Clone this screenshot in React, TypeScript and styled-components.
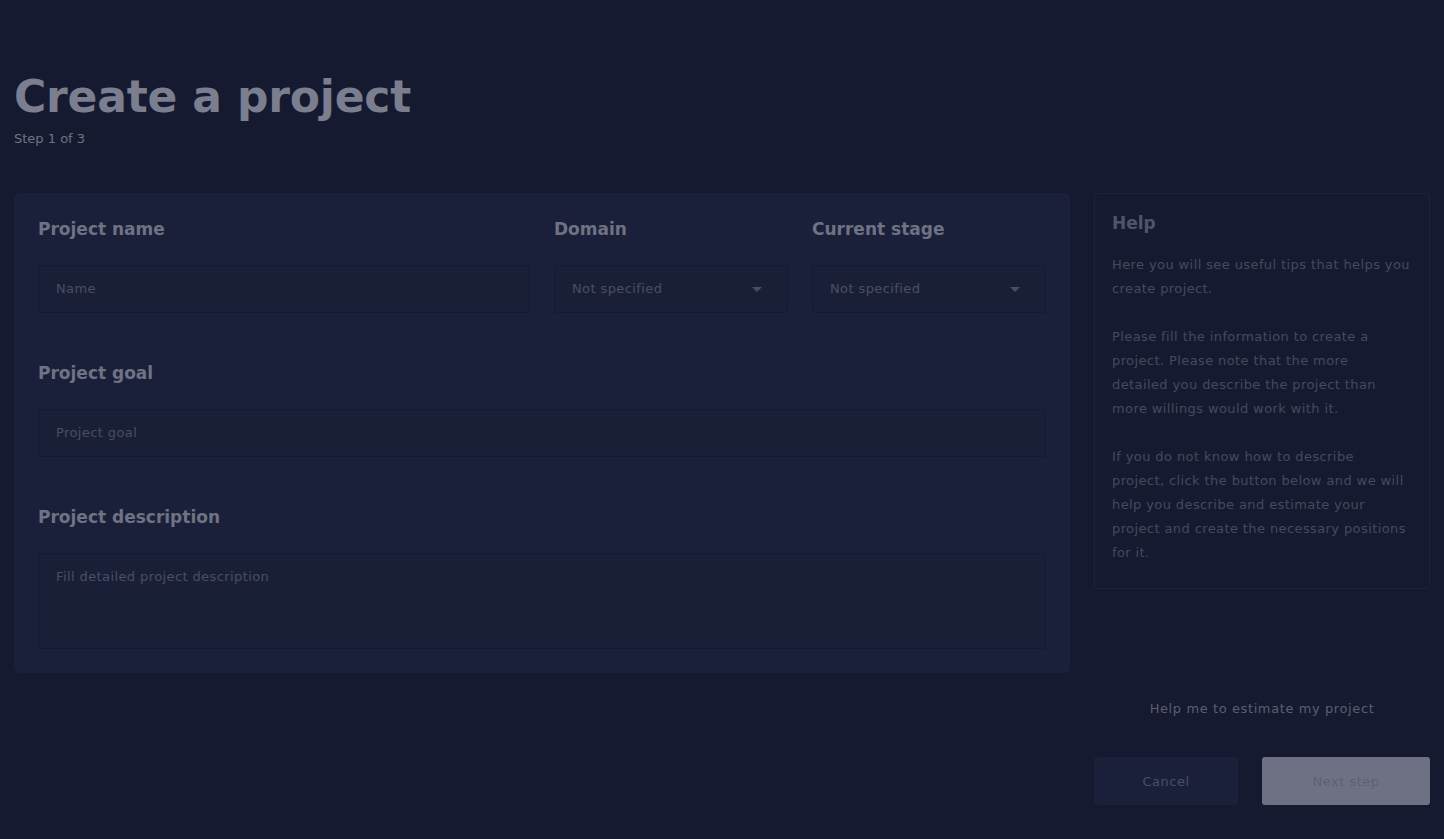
import React from "react";
import styled, { createGlobalStyle } from "styled-components";

const Global = createGlobalStyle`
  html, body { margin: 0; padding: 0; background: #161a30; }
  body { font-family: "DejaVu Sans", "Noto Sans", sans-serif; }
  * { box-sizing: border-box; }
`;

const Page = styled.div`
  min-height: 839px;
  background: #161a30;
  padding: 68px 14px 0 14px;
`;

const Title = styled.h1`
  margin: 0;
  font-size: 44px;
  line-height: 58px;
  font-weight: 700;
  color: #7b7e8e;
  letter-spacing: -0.2px;
`;

const Step = styled.div`
  margin-top: 3px;
  font-size: 13px;
  line-height: 20px;
  color: #6f7283;
`;

const Body = styled.div`
  margin-top: 44px;
  display: flex;
  gap: 24px;
  align-items: flex-start;
`;

const Card = styled.div`
  width: 1056px;
  background: #1b203a;
  border-radius: 6px;
  padding: 24px;
  display: flex;
  flex-direction: column;
  gap: 48px;
`;

const Row = styled.div<{ $cols: string }>`
  display: grid;
  grid-template-columns: ${(p) => p.$cols};
  gap: 24px;
`;

const Field = styled.div`
  display: flex;
  flex-direction: column;
  gap: 24px;
`;

const Label = styled.div`
  font-size: 17px;
  line-height: 24px;
  font-weight: 700;
  color: #6f7283;
`;

const Input = styled.div<{ $tall?: boolean }>`
  height: ${(p) => (p.$tall ? 96 : 48)}px;
  border: 1px solid #151a2f;
  border-radius: 3px;
  background: #1a1f38;
  padding: ${(p) => (p.$tall ? "13px 17px" : "0 17px")};
  display: flex;
  align-items: ${(p) => (p.$tall ? "flex-start" : "center")};
  justify-content: space-between;
  font-size: 13px;
  line-height: 20px;
  letter-spacing: 0.4px;
  color: #4a4e63;
`;

const Caret = styled.span`
  width: 0;
  height: 0;
  border-left: 5px solid transparent;
  border-right: 5px solid transparent;
  border-top: 5px solid #4a4e63;
  margin-right: 8px;
`;

const Side = styled.div`
  width: 336px;
  display: flex;
  flex-direction: column;
`;

const HelpBox = styled.div`
  border: 1px solid #1e2339;
  border-radius: 4px;
  padding: 17px 10px 23px 17px;
`;

const HelpTitle = styled.div`
  font-size: 17px;
  line-height: 24px;
  font-weight: 700;
  color: #50546a;
`;

const HelpText = styled.p`
  margin: 18px 0 0 0;
  font-size: 13px;
  line-height: 24px;
  letter-spacing: 0.4px;
  white-space: nowrap;
  color: #45495e;
  & + & { margin-top: 24px; }
`;

const EstimateLink = styled.div`
  margin-top: 108px;
  text-align: center;
  font-size: 13px;
  line-height: 24px;
  letter-spacing: 0.6px;
  color: #5a5e72;
`;

const Buttons = styled.div`
  margin-top: 36px;
  display: grid;
  grid-template-columns: 144px 168px;
  gap: 24px;
`;

const Button = styled.div<{ $primary?: boolean }>`
  height: 48px;
  border-radius: 3px;
  display: flex;
  align-items: center;
  justify-content: center;
  font-size: 13px;
  letter-spacing: 0.5px;
  background: ${(p) => (p.$primary ? "#6e7184" : "#1b203a")};
  color: ${(p) => (p.$primary ? "#5c6075" : "#4a4e63")};
`;

const helpParagraphs = [
  ["Here you will see useful tips that helps you", "create project."],
  [
    "Please fill the information to create a",
    "project. Please note that the more",
    "detailed you describe the project than",
    "more willings would work with it.",
  ],
  [
    "If you do not know how to describe",
    "project, click the button below and we will",
    "help you describe and estimate your",
    "project and create the necessary positions",
    "for it.",
  ],
];

export default function App() {
  return (
    <>
      <Global />
      <Page>
        <Title>Create a project</Title>
        <Step>Step 1 of 3</Step>
        <Body>
          <Card>
            <Row $cols="492px 234px 234px">
              <Field>
                <Label>Project name</Label>
                <Input>Name</Input>
              </Field>
              <Field>
                <Label>Domain</Label>
                <Input>
                  Not specified
                  <Caret />
                </Input>
              </Field>
              <Field>
                <Label>Current stage</Label>
                <Input>
                  Not specified
                  <Caret />
                </Input>
              </Field>
            </Row>
            <Field>
              <Label>Project goal</Label>
              <Input>Project goal</Input>
            </Field>
            <Field>
              <Label>Project description</Label>
              <Input $tall>Fill detailed project description</Input>
            </Field>
          </Card>
          <Side>
            <HelpBox>
              <HelpTitle>Help</HelpTitle>
              {helpParagraphs.map((lines, i) => (
                <HelpText key={i}>
                  {lines.map((l, j) => (
                    <React.Fragment key={j}>
                      {j > 0 && <br />}
                      {l}
                    </React.Fragment>
                  ))}
                </HelpText>
              ))}
            </HelpBox>
            <EstimateLink>Help me to estimate my project</EstimateLink>
            <Buttons>
              <Button>Cancel</Button>
              <Button $primary>Next step</Button>
            </Buttons>
          </Side>
        </Body>
      </Page>
    </>
  );
}
